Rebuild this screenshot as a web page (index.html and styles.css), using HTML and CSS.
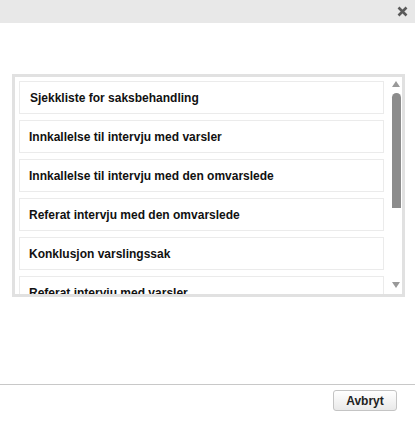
FILE: index.html
```html
<!DOCTYPE html>
<html>
<head>
<meta charset="utf-8">
<link rel="stylesheet" href="styles.css">
</head>
<body>
<div class="dialog">
  <div class="titlebar">
    <svg class="close" width="11" height="11" viewBox="0 0 11 11"><path d="M1.5 1.5 L9.5 9.5 M9.5 1.5 L1.5 9.5" stroke="#5a5a5a" stroke-width="2.6" stroke-linecap="butt"/></svg>
  </div>
  <div class="content">
    <div class="box">
      <div class="list">
        <div class="item first">Sjekkliste for saksbehandling</div>
        <div class="item">Innkallelse til intervju med varsler</div>
        <div class="item">Innkallelse til intervju med den omvarslede</div>
        <div class="item">Referat intervju med den omvarslede</div>
        <div class="item">Konklusjon varslingssak</div>
        <div class="item">Referat intervju med varsler</div>
      </div>
      <div class="scrollbar">
        <div class="arrow up"></div>
        <div class="track"><div class="thumb"></div></div>
        <div class="arrow down"></div>
      </div>
    </div>
  </div>
  <div class="footer">
    <button class="btn">Avbryt</button>
  </div>
</div>
</body>
</html>
```

FILE: styles.css
```css
html, body {
  margin: 0;
  padding: 0;
  background: #fff;
}
.dialog {
  width: 415px;
  height: 423px;
  display: flex;
  flex-direction: column;
  font-family: "Liberation Sans", Arial, sans-serif;
}
.titlebar {
  height: 23px;
  background: #e8e8e8;
  display: flex;
  align-items: center;
  justify-content: flex-end;
  padding-right: 7px;
  flex-shrink: 0;
}
.close {
  display: block;
  margin-top: -1px;
}
.content {
  flex: 1;
  padding: 51px 10px 0 12px;
}
.box {
  height: 223px;
  box-sizing: border-box;
  border: 3px solid #e1e1e1;
  display: flex;
}
.list {
  flex: 1;
  overflow: hidden;
  padding: 4px 1px 0 4px;
  display: flex;
  flex-direction: column;
  gap: 6px;
}
.item {
  flex-shrink: 0;
  height: 33px;
  box-sizing: border-box;
  border: 1px solid #ebebeb;
  padding: 0 9px;
  display: flex;
  align-items: center;
  font-size: 12px;
  font-weight: bold;
  color: #111;
}
.item.first {
  padding-left: 10px;
}
.scrollbar {
  width: 17px;
  display: flex;
  flex-direction: column;
  align-items: flex-end;
  padding-right: 1px;
  box-sizing: border-box;
}
.arrow {
  width: 0;
  height: 0;
  border-left: 4px solid transparent;
  border-right: 4px solid transparent;
  margin-right: 1px;
}
.arrow.up {
  margin-top: 4px;
  border-bottom: 6px solid #999;
}
.arrow.down {
  margin-bottom: 6px;
  border-top: 6px solid #999;
}
.track {
  flex: 1;
  padding-top: 6px;
}
.thumb {
  width: 9px;
  height: 115px;
  background: #8c8c8c;
  border-radius: 5px 5px 0 0;
}
.footer {
  height: 39px;
  box-sizing: border-box;
  border-top: 1px solid #c8c8c8;
  display: flex;
  justify-content: flex-end;
  align-items: flex-start;
  padding: 5px 18px 0 0;
  flex-shrink: 0;
}
.btn {
  width: 64px;
  height: 21px;
  box-sizing: border-box;
  border: 1px solid #c4c4c4;
  border-radius: 3px;
  background: linear-gradient(#ffffff, #e9e9e9);
  font-family: "Liberation Sans", Arial, sans-serif;
  font-size: 12px;
  font-weight: bold;
  color: #222;
  padding: 0;
}
```
